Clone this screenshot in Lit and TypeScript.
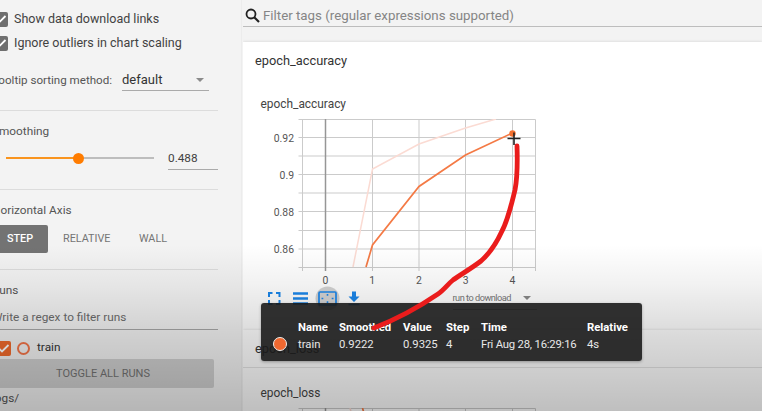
import { LitElement, html, svg, css } from "lit";
import { customElement, property } from "lit/decorators.js";

@customElement("tb-sidebar")
class TbSidebar extends LitElement {
  static styles = css`
    :host { display: block; overflow: hidden; background: #f3f3f3; color: #424242; border-right: 1px solid #ececec; }
    .inner { width: 226px; margin-left: -8px; }
    section { box-sizing: border-box; border-bottom: 1px solid #dcdcdc; white-space: nowrap; }
    .general { height: 111px; padding-top: 7px; }
    .row { display: flex; align-items: center; height: 24px; font-size: 12.5px; gap: 6px; }
    .box { width: 15px; height: 15px; border-radius: 2px; background: #6f6f6f; flex: none; display: block; margin-left: 1px; }
    .row span { position: relative; top: -0.5px; }
    .tip { height: 24px; margin-top: 13px; display: flex; align-items: flex-start; justify-content: space-between; font-size: 11.6px; padding-right: 9px; }
    .tip .lbl { padding-top: 5px; line-height: 14px; color: #555; }
    .drop { width: 87px; height: 22px; border-bottom: 1px solid #aaa; display: flex; justify-content: space-between; align-items: center; font-size: 13px; box-sizing: border-box; padding: 0 5px 0 0; margin-top: 1px; color: #333; }
    .caret { border: 4px solid transparent; border-top-color: #8a8a8a; border-bottom: 0; }
    .smooth { height: 79px; padding-top: 13px; }
    .lbl2 { font-size: 11.8px; line-height: 15px; color: #555; }
    .slide { display: flex; align-items: center; justify-content: space-between; margin: 7px 0 0 14px; height: 24px; }
    .track { width: 148px; height: 2px; background: linear-gradient(90deg, #f9941e 72px, #bdbdbd 72px); display: flex; align-items: center; }
    .thumb { width: 11px; height: 11px; border-radius: 50%; background: #ff7c00; margin-left: 67px; }
    .num { width: 50px; height: 24px; border-bottom: 1px solid #aaa; font-size: 11.8px; line-height: 24px; box-sizing: border-box; }
    .axis { height: 80px; padding-top: 13px; }
    .btns { display: flex; margin-top: 7px; height: 28px; line-height: 28px; font-size: 10.8px; color: #757575; }
    .step { width: 56px; box-sizing: border-box; padding-left: 15px; background: #737373; color: #fff; border-radius: 2px; font-weight: 500; }
    .rel { margin-left: 15px; width: 76px; }
    .runs { padding-top: 13px; border: 0; }
    .regex { margin-top: 4px; height: 27px; line-height: 31px; border-bottom: 1px solid #a8a8a8; font-size: 11.8px; color: #6c6c6c; }
    .run { display: flex; align-items: center; height: 24px; margin-top: 6px; font-size: 11.8px; color: #333; }
    .run .box { background: #f06a2c; width: 15px; height: 15px; margin-left: 4px; }
    .run span { position: relative; top: -1px; }
    .ring { width: 9px; height: 9px; border: 2px solid #f4764a; border-radius: 50%; margin: 0 7px 0 6px; }
    .toggle { height: 29px; line-height: 29px; width: 222px; background: #d0d0d0; color: #737373; font-size: 11px; text-align: center; border-radius: 2px; margin-top: -1px; }
    .logs { font-size: 11.8px; line-height: 15px; margin-top: 3px; color: #555; }
  `;

  check() {
    return html`<svg class="box" viewBox="0 0 15 15"><path d="M3 7.500 6 10.500 12.500 4" fill="none" stroke="#fff" stroke-width="1.800" /></svg>`;
  }

  render() {
    return html`<div class="inner">
      <section class="general">
        <div class="row">${this.check()}<span>Show data download links</span></div>
        <div class="row">${this.check()}<span>Ignore outliers in chart scaling</span></div>
        <div class="tip"><span class="lbl">Tooltip sorting method:</span>
          <div class="drop"><span>default</span><i class="caret"></i></div></div>
      </section>
      <section class="smooth">
        <div class="lbl2">Smoothing</div>
        <div class="slide"><div class="track"><i class="thumb"></i></div><div class="num">0.488</div></div>
      </section>
      <section class="axis">
        <div class="lbl2">Horizontal Axis</div>
        <div class="btns"><span class="step">STEP</span><span class="rel">RELATIVE</span><span>WALL</span></div>
      </section>
      <section class="runs">
        <div class="lbl2">Runs</div>
        <div class="regex">Write a regex to filter runs</div>
        <div class="run">${this.check()}<i class="ring"></i><span>train</span></div>
        <div class="toggle">TOGGLE ALL RUNS</div>
        <div class="logs">logs/</div>
      </section>
    </div>`;
  }
}

@customElement("tb-chart")
class TbChart extends LitElement {
  @property({ type: Boolean }) loss = false;
  static styles = css`
    :host { display: block; height: 178px; }
    svg { display: block; overflow: hidden; }
    .grid { stroke: #cbcbcb; stroke-width: 1; fill: none; }
    .zero { stroke: #969696; stroke-width: 1.5; }
    .ticks { font: 10.4px Roboto, sans-serif; fill: #555; }
    .raw { fill: none; stroke: #fbdbd3; stroke-width: 1.5; }
    .line { fill: none; stroke: #f47a45; stroke-width: 1.7; }
    .dot { fill: #f4702f; }
  `;

  render() {
    const xs = [52.5, 75.5, 122.5, 169, 215.5, 262.5, 285.5];
    const ys = [0.5, 18.5, 37, 55.5, 74, 92.5, 111.5, 130, 148.5];
    return html`<svg width="300" height="178" viewBox="0 0 300 178">
      ${xs.map((x) => svg`<path class="grid" d="M${x} 0.500V152" />`)}
      ${ys.map((y) => svg`<path class="grid" d="M48.500 ${y}H285.500" />`)}
      <path class="zero" d="M75.500 0V152" />
      ${this.loss
        ? svg`<path class="raw" d="M100 0 108 30" /><path class="line" d="M112.500 0 121 30 169 90" />`
        : svg`
          <path class="raw" d="M103 148 122.500 50 169 25 215.500 9 246 0" />
          <path class="line" d="M116 148 122.500 126 169 67.500 215.500 36 262.500 14" />
          <circle class="dot" cx="262.500" cy="14.500" r="3.200" />
          <g class="ticks">
            ${["0.92", "0.9", "0.88", "0.86"].map((t, i) => svg`<text x="44" y=${22.5 + i * 37.1} text-anchor="end">${t}</text>`)}
            ${[0, 1, 2, 3, 4].map((n) => svg`<text x=${75.5 + n * 46.7} y="164.500" text-anchor="middle">${n}</text>`)}
          </g>`}
    </svg>`;
  }
}

@customElement("tb-tooltip")
class TbTooltip extends LitElement {
  static styles = css`
    :host { display: block; box-sizing: border-box; width: 381px; height: 58px; border-radius: 3px; background: rgba(27, 27, 27, 0.9); color: #e8e8e8; padding-top: 16px; font-size: 11.3px; box-shadow: 0 1px 3px rgba(0, 0, 0, 0.3); }
    .table { display: grid; grid-template-columns: 37px 41px 64px 43px 35px 106px auto; grid-auto-rows: 17px; line-height: 17px; white-space: nowrap; }
    .b { font-weight: 700; color: #fff; }
    .when { letter-spacing: -0.2px; }
    .swatch { width: 12px; height: 12px; border-radius: 50%; border: 1.5px solid #eee; background: #ef6830; margin: 1px 0 0 12px; }
  `;
  render() {
    const heads = ["Name", "Smoothed", "Value", "Step", "Time", "Relative"];
    const vals = ["train", "0.9222", "0.9325", "4", "Fri Aug 28, 16:29:16", "4s"];
    return html`<div class="table">
      <span></span>${heads.map((h) => html`<span class="b">${h}</span>`)}
      <i class="swatch"></i>${vals.map((v, i) => html`<span class=${i === 4 ? "when" : ""}>${v}</span>`)}
    </div>`;
  }
}

@customElement("app-root")
class AppRoot extends LitElement {
  static styles = css`
    :host { display: grid; grid-template-columns: 243px 1fr; width: 762px; height: 411px; overflow: hidden; position: relative; background: #f3f3f3; font-family: Roboto, sans-serif; color: #333; }
    tb-sidebar { width: 242px; height: 411px; box-sizing: border-box; }
    main { height: 411px; overflow: hidden; min-width: 0; }
    .search { display: flex; align-items: center; height: 27px; box-sizing: border-box; border-bottom: 1px solid #bdbdbd; padding: 5px 0 0 2px; font-size: 13.3px; color: #858585; gap: 2px; }
    .search svg { flex: none; }
    .head { height: 38px; box-sizing: border-box; background: #fff; border-bottom: 1px solid #e4e4e4; padding-left: 12px; line-height: 38px; font-size: 12.8px; box-shadow: 0 0 3px rgba(0, 0, 0, 0.14); }
    .first { margin-top: 15px; }
    .first + .body { margin-top: -1px; }
    .body { background: #fff; height: 251px; padding: 18px 0 0 17.5px; box-sizing: border-box; }
    .title { font-size: 11.9px; line-height: 15px; height: 22px; box-sizing: border-box; color: #444; }
    .plot { margin-left: -10.5px; height: 167px; }
    .tools { display: flex; align-items: center; padding-left: 5.5px; height: 24px; }
    .tools > svg { flex: none; }
    .dl { margin-left: 90.5px; font-size: 9.2px; letter-spacing: -0.5px; color: #777; display: flex; align-items: center; width: 84px; height: 23px; box-sizing: border-box; padding-right: 6px; border-bottom: 1px solid #aaa; justify-content: space-between; white-space: nowrap; }
    .caret { border: 4px solid transparent; border-top-color: #888; border-bottom: 0; }
    .shade { position: absolute; inset: 0; background: linear-gradient(rgba(0,0,0,0) 245px, rgba(0,0,0,.055) 285px, rgba(0,0,0,.145) 335px, rgba(0,0,0,.25) 411px); }
    tb-tooltip { position: absolute; left: 261px; top: 303px; }
    .ink { position: absolute; left: 0; top: 0; }
  `;

  render() {
    return html`
      <tb-sidebar></tb-sidebar>
      <main>
        <div class="search">
          <svg width="16" height="16" viewBox="0 0 16 16" fill="none" stroke="#222" stroke-width="1.800"><circle cx="6" cy="6" r="4.500" /><path d="M9.200 9.200 14 14" stroke-width="2.200" /></svg>
          <span>Filter tags (regular expressions supported)</span>
        </div>
        <div class="head first">epoch_accuracy</div>
        <div class="body">
          <div class="title">epoch_accuracy</div>
          <div class="plot"><tb-chart></tb-chart></div>
          <div class="tools">
            <svg width="96" height="24" viewBox="0 0 96 24" fill="none" stroke="#1b86ea">
              <circle cx="61.500" cy="12.500" r="12" fill="#d3d3d3" stroke="none" />
              <path stroke-width="2" d="M3 11V7H6.500M10 7H13.500V11M13.500 14V18H10M6.500 18H3V14" />
              <path stroke-width="2.500" d="M27 7.500H42M27 12.500H42M27 17.500H42" />
              <rect x="53" y="6" width="17" height="13" rx="1" stroke-width="1.700" />
              <path stroke-width="1.600" d="M61.500 8V9.800M61.500 15.200V17M55.500 12.500H57.300M65.700 12.500H67.500" />
              <path fill="#1b86ea" stroke="none" d="M86 5.500H90V10.500H93.500L88 16 82.500 10.500H86Z" />
              <path stroke-width="1.600" d="M82.500 18.500H93.500" />
            </svg>
            <div class="dl"><span>run to download</span><i class="caret"></i></div>
          </div>
        </div>
        <div class="head">epoch_loss</div>
        <div class="body">
          <div class="title">epoch_loss</div>
          <div class="plot"><tb-chart loss></tb-chart></div>
        </div>
      </main>
      <div class="shade"></div>
      <tb-tooltip></tb-tooltip>
      <svg class="ink" width="762" height="411" viewBox="0 0 762 411" fill="none">
        <path d="M507.500 138.500H520.500M514 132.500V145" stroke="#222" stroke-width="1.600" />
        <path d="M517 146C517.500 161 517.500 177 515 190C511 206 508 220 502 231C497 242 490 253 481 261C472 268 460 275 453 280C448 284 444 290 438 294C419 307 397 319 374 328" stroke="#ea1c1c" stroke-width="4.800" stroke-linecap="round" stroke-linejoin="round" />
      </svg>`;
  }
}
